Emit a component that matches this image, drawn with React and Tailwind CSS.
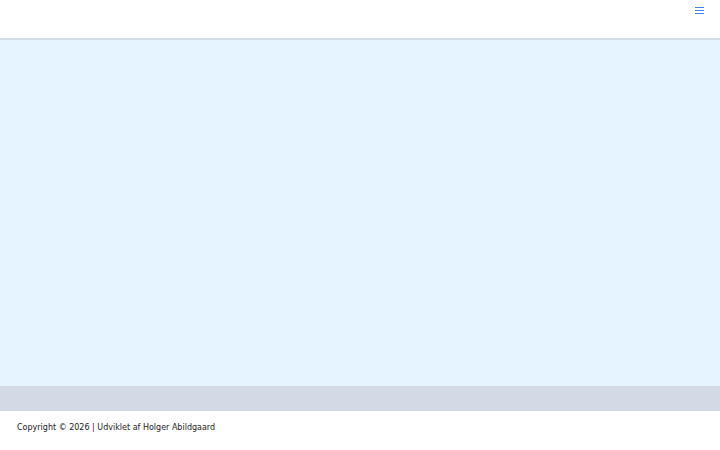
export default function App() {
    return (
        <div className="flex h-[450px] flex-col bg-white" style={{ fontFamily: '"DejaVu Sans", sans-serif' }}>
            {/* Header */}
            <header className="flex h-[40px] items-start justify-end border-b-2 border-[#d3dde8] bg-white pr-[16px] pt-[7px]">
                <button className="text-[#3b82f6]" aria-label="Menu">
                    <svg width="9" height="7" viewBox="0 0 9 7" className="block">
                        <rect x="0" y="0" width="9" height="1" fill="currentColor" />
                        <rect x="0" y="3" width="9" height="1" fill="currentColor" />
                        <rect x="0" y="6" width="9" height="1" fill="currentColor" />
                    </svg>
                </button>
            </header>

            {/* Main content */}
            <main className="flex-1 bg-[#e6f4ff]"></main>

            {/* Footer */}
            <div className="h-[25px] bg-[#d3dae6]"></div>
            <footer className="h-[39px] px-[17px] pt-[11px]">
                <p className="text-[8px] leading-[12px] text-[#222]">Copyright © 2026 | Udviklet af Holger Abildgaard</p>
            </footer>
        </div>
    );
}
